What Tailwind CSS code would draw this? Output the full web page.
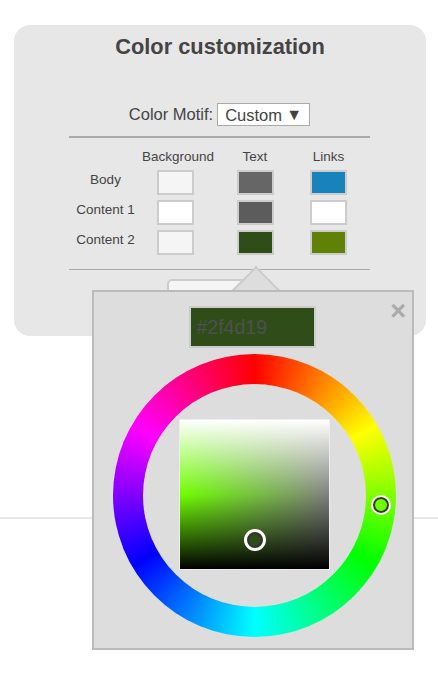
<!DOCTYPE html>
<html>
<head>
    <meta charset="UTF-8">
    <script src="https://cdn.jsdelivr.net/npm/@tailwindcss/browser@4"></script>
</head>
<body class="relative bg-white h-[685px] overflow-hidden font-['Liberation_Sans',Arial,sans-serif] text-[#444]">
    <!-- Settings card -->
    <div class="ml-[14px] mt-[25px] w-[412px] h-[311px] bg-[#e7e7e7] rounded-[16px] flex flex-col items-center">
        <h2 class="mt-[10px] text-[21.8px] leading-[24px] font-bold">Color customization</h2>

        <div class="mt-[44px] mr-[1px] h-[23px] flex items-center gap-[4px] text-[16.5px]">
            <span>Color Motif:</span>
            <div class="w-[93px] h-[23px] bg-white border border-[#aaa] flex items-center justify-between px-[7px]">
                <span class="mt-[1px]">Custom</span>
                <span class="text-[16px] leading-none">▼</span>
            </div>
        </div>

        <div class="mt-[10px] mr-[1px] w-[301px] h-[2px] bg-[#aaa]"></div>

        <!-- Colour table -->
        <div class="w-[301px] mr-[1px] mt-[9px] text-[13.5px] leading-[16px] grid grid-cols-[73px_72px_82px_65px] grid-rows-[20.5px_30px_30px_30px] items-center">
            <div class="col-start-2 text-center whitespace-nowrap">Background</div>
            <div class="text-center">Text</div>
            <div class="text-center">Links</div>
            <div class="col-start-1 row-start-2 text-center -mt-[5px]">Body</div>
            <div class="justify-self-center mr-[5px] w-[37px] h-[25px] border-2 border-[#ccc] bg-[#f5f5f5]"></div>
            <div class="justify-self-center w-[37px] h-[25px] border-2 border-[#ccc] bg-[#666]"></div>
            <div class="justify-self-center w-[37px] h-[25px] border-2 border-[#ccc] bg-[#1783bd]"></div>
            <div class="text-center -mt-[5px]">Content 1</div>
            <div class="justify-self-center mr-[5px] w-[37px] h-[25px] border-2 border-[#ccc] bg-white"></div>
            <div class="justify-self-center w-[37px] h-[25px] border-2 border-[#ccc] bg-[#5c5c5c]"></div>
            <div class="justify-self-center w-[37px] h-[25px] border-2 border-[#ccc] bg-white"></div>
            <div class="text-center -mt-[5px]">Content 2</div>
            <div class="justify-self-center mr-[5px] w-[37px] h-[25px] border-2 border-[#ccc] bg-[#f5f5f5]"></div>
            <div class="justify-self-center w-[37px] h-[25px] border-2 border-[#ccc] bg-[#2f4d19]"></div>
            <div class="justify-self-center w-[37px] h-[25px] border-2 border-[#ccc] bg-[#5f8106]"></div>
        </div>

        <div class="mt-[11.5px] mr-[1px] w-[301px] h-px bg-[#aaa]"></div>

        <div class="mt-[9px] mr-[1px] w-[105px] h-[30px] bg-[#f5f5f5] border-2 border-[#ccc] rounded-[5px]"></div>
    </div>

    <div class="mt-[181px] h-[2px] bg-[#e8e8e8]"></div>

    <!-- Colour picker popup -->
    <div class="absolute left-[239px] top-[273px] w-[34px] h-[34px] rotate-45 bg-[#ddd] border-t-2 border-l-2 border-[#ccc]"></div>
    <div class="absolute left-[92px] top-[290px] w-[322px] h-[360px] bg-[#ddd] border-2 border-[#bbb] flex flex-col items-center">
        <div class="absolute right-[6px] top-[6px] text-[#aaa] text-[27px] leading-[27px] font-bold">×</div>

        <div class="mt-[14px] mr-[2px] w-[127px] h-[42px] bg-[#2f4d19] border-2 border-[#ccc] pl-[6px] text-[19.5px] leading-[38px] text-[#505050]">#2f4d19</div>

        <!-- Hue wheel -->
        <div class="relative mt-[6px] ml-[3px] w-[283px] h-[283px] rounded-full flex items-center justify-center bg-[conic-gradient(#f00,#ff0,#0f0,#0ff,#00f,#f0f,#f00)]">
            <div class="w-[223px] h-[223px] rounded-full bg-[#ddd] flex items-center justify-center">
                <div class="relative mb-[2px] w-[151px] h-[151px] border border-[#eee] bg-[linear-gradient(to_bottom,#fff,transparent_50%,#000),linear-gradient(to_right,#6eff00,#808080)]">
                    <div class="absolute left-[64px] top-[109px] w-[22px] h-[22px] rounded-full border-[3px] border-white bg-[#2f4d19] ring-2 ring-inset ring-[#333]"></div>
                </div>
            </div>
            <div class="absolute left-[258px] top-[141px] w-[20px] h-[20px] rounded-full border-[2px] border-white bg-[#6eff00] ring-2 ring-inset ring-[#333]"></div>
        </div>
    </div>
</body>
</html>
